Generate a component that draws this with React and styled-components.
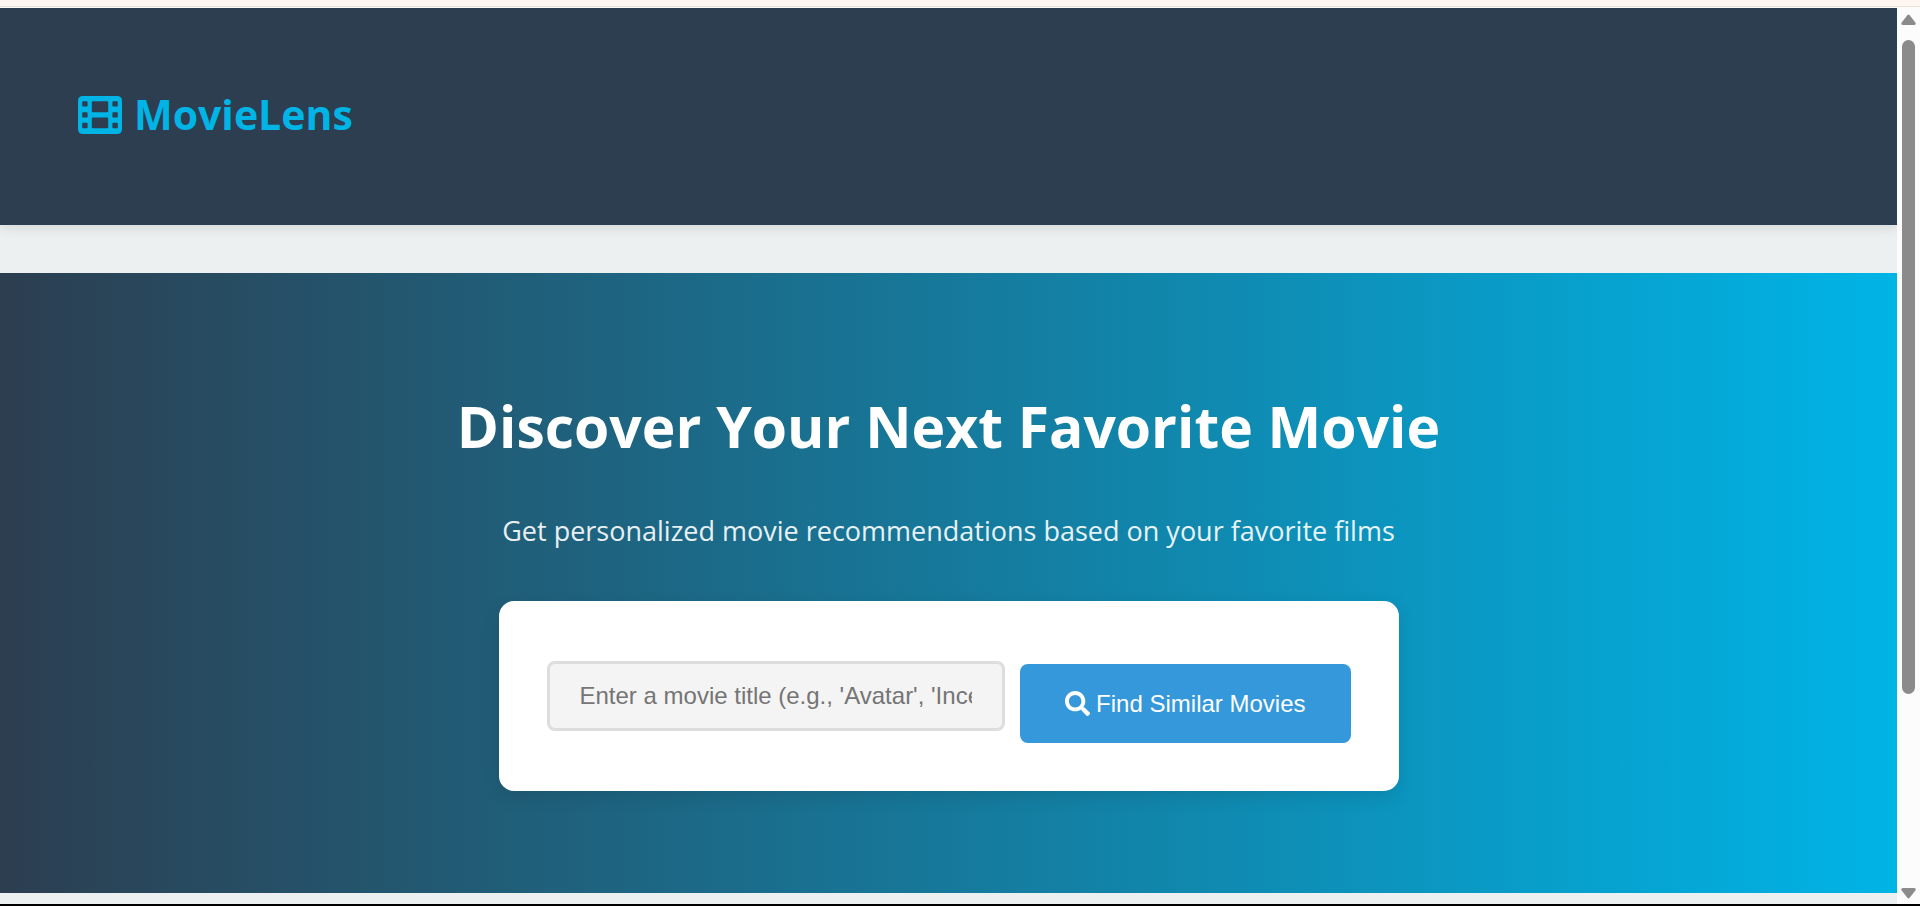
import React from "react";
import styled, { createGlobalStyle } from "styled-components";
import { FaSearch } from "react-icons/fa";

const GlobalStyle = createGlobalStyle`
  *, *::before, *::after { box-sizing: border-box; }
  body {
    margin: 0;
    background: #ecf0f1;
    font-family: "Segoe UI", "Open Sans", "Noto Sans", sans-serif;
  }
  h1, p { margin: 0; }
`;

const Frame = styled.div`
  display: flex;
  flex-direction: column;
  height: 100vh;
  overflow: hidden;
  border-bottom: 2px solid #000;
`;

const TopStrip = styled.div`
  flex: none;
  height: 8px;
  background: #fff6f4;
  border-bottom: 1px solid #fff;
  box-shadow: inset 0 -1px 0 #f5dcd3;
`;

const Viewport = styled.div`
  display: flex;
  flex: 1;
  min-height: 0;
`;

const Page = styled.div`
  flex: 1;
  min-width: 0;
  overflow: hidden;
`;

const Header = styled.header`
  padding: 73px 78px 77px;
  margin-bottom: 48px;
  background: #2c3e50;
  box-shadow: 0 3px 12px rgba(0, 0, 0, 0.1);
`;

const Logo = styled.a`
  display: inline-flex;
  align-items: center;
  gap: 12px;
  color: #00b4e6;
  font-size: 41px;
  font-weight: 700;
  line-height: 67px;
  text-decoration: none;
  vertical-align: top;
`;

const FilmIcon = styled.svg`
  width: 44px;
  height: 38px;
  fill: currentColor;
`;

const Hero = styled.main`
  display: flex;
  flex-direction: column;
  align-items: center;
  padding: 102px 24px;
  background: linear-gradient(90deg, #2c3e50, #00b4e6);
  color: #fff;
  text-align: center;
`;

const Title = styled.h1`
  margin-bottom: 30px;
  font-size: 57px;
  font-weight: 700;
  line-height: 102px;
`;

const Subtitle = styled.p`
  margin-bottom: 46px;
  font-size: 27px;
  line-height: 48px;
  opacity: 0.9;
`;

const SearchCard = styled.form`
  display: flex;
  align-items: flex-start;
  gap: 15px;
  width: 100%;
  max-width: 900px;
  padding: 48px;
  border-radius: 15px;
  background: #fff;
  box-shadow: 0 6px 18px rgba(0, 0, 0, 0.1);
`;

const SearchInput = styled.input`
  flex: 1;
  min-width: 0;
  height: 70px;
  margin: 12px 0;
  padding: 0 30px;
  border: 3px solid #ddd;
  border-radius: 8px;
  background: #f4f4f4;
  color: #2c3e50;
  font-family: "Liberation Sans", Arial, sans-serif;
  font-size: 24px;

  &::placeholder {
    color: #757575;
  }
`;

const SearchButton = styled.button`
  display: flex;
  align-items: center;
  gap: 6px;
  height: 79px;
  margin-top: 15px;
  padding: 0 45px;
  border: 0;
  border-radius: 8px;
  background: #3498db;
  color: #fff;
  font-family: "Liberation Sans", Arial, sans-serif;
  font-size: 24px;
  white-space: nowrap;
  cursor: pointer;

  svg {
    width: 25px;
    height: 25px;
  }
`;

const ScrollTrack = styled.div`
  display: flex;
  flex-direction: column;
  align-items: center;
  flex: none;
  gap: 14px;
  width: 23px;
  padding: 6px 0 5px;
  background: #fcfcfc;
`;

const ScrollRange = styled.div`
  flex: 1;
  width: 13px;
`;

const ScrollThumb = styled.div`
  height: 78.5%;
  border-radius: 7px;
  background: #8b8b8b;
`;

const ArrowIcon = styled.svg`
  flex: none;
  width: 15px;
  height: 12px;
  fill: #8b8b8b;
`;

export default function App() {
  return (
    <>
      <GlobalStyle />
      <Frame>
        <TopStrip />
        <Viewport>
          <Page>
            <Header>
              <Logo href="#">
                <FilmIcon viewBox="0 0 44 38" aria-hidden="true">
                  <path
                    fillRule="evenodd"
                    d="M5 0H39Q44 0 44 5V33Q44 38 39 38H5Q0 38 0 33V5Q0 0 5 0Z
                       M5 5.2Q4.2 5.2 4.2 6V9.8Q4.2 10.6 5 10.6H8.8Q9.6 10.6 9.6 9.8V6Q9.6 5.2 8.8 5.2Z
                       M5 16.2Q4.2 16.2 4.2 17V20.8Q4.2 21.6 5 21.6H8.8Q9.6 21.6 9.6 20.8V17Q9.6 16.2 8.8 16.2Z
                       M5 26.8Q4.2 26.8 4.2 27.6V31.4Q4.2 32.2 5 32.2H8.8Q9.6 32.2 9.6 31.4V27.6Q9.6 26.8 8.8 26.8Z
                       M35.2 5.2Q34.4 5.2 34.4 6V9.8Q34.4 10.6 35.2 10.6H39Q39.8 10.6 39.8 9.8V6Q39.8 5.2 39 5.2Z
                       M35.2 16.2Q34.4 16.2 34.4 17V20.8Q34.4 21.6 35.2 21.6H39Q39.8 21.6 39.8 20.8V17Q39.8 16.2 39 16.2Z
                       M35.2 26.8Q34.4 26.8 34.4 27.6V31.4Q34.4 32.2 35.2 32.2H39Q39.8 32.2 39.8 31.4V27.6Q39.8 26.8 39 26.8Z
                       M15 5.2Q13.8 5.2 13.8 6.4V15Q13.8 16.2 15 16.2H29Q30.2 16.2 30.2 15V6.4Q30.2 5.2 29 5.2Z
                       M15 21.6Q13.8 21.6 13.8 22.8V31Q13.8 32.2 15 32.2H29Q30.2 32.2 30.2 31V22.8Q30.2 21.6 29 21.6Z"
                  />
                </FilmIcon>
                MovieLens
              </Logo>
            </Header>
            <Hero>
              <Title>Discover Your Next Favorite Movie</Title>
              <Subtitle>
                Get personalized movie recommendations based on your favorite films
              </Subtitle>
              <SearchCard onSubmit={(event) => event.preventDefault()}>
                <SearchInput
                  type="text"
                  aria-label="Movie title"
                  placeholder="Enter a movie title (e.g., 'Avatar', 'Inception')"
                />
                <SearchButton type="submit">
                  <FaSearch aria-hidden="true" />
                  Find Similar Movies
                </SearchButton>
              </SearchCard>
            </Hero>
          </Page>
          <ScrollTrack aria-hidden="true">
            <ArrowIcon viewBox="0 0 15 12">
              <path d="M6.3 1.2Q7.5 0 8.7 1.2L14.5 8.8Q15.2 11 13 11H2Q-.2 11 .5 8.8Z" />
            </ArrowIcon>
            <ScrollRange>
              <ScrollThumb />
            </ScrollRange>
            <ArrowIcon viewBox="0 0 15 12">
              <path d="M6.3 10.8Q7.5 12 8.7 10.8L14.5 3.2Q15.2 1 13 1H2Q-.2 1 .5 3.2Z" />
            </ArrowIcon>
          </ScrollTrack>
        </Viewport>
      </Frame>
    </>
  );
}
